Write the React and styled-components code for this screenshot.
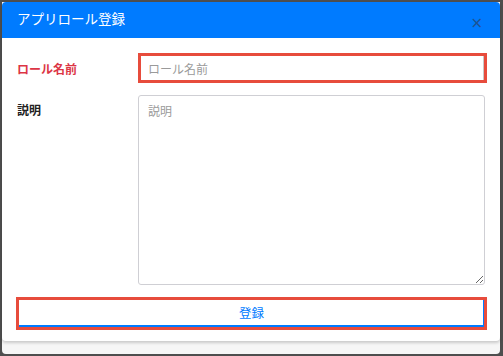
import React from "react";
import styled, { createGlobalStyle } from "styled-components";

const Global = createGlobalStyle`
  html, body { margin: 0; padding: 0; }
  body {
    width: 503px; height: 356px; overflow: hidden;
    background: #4e4e4e;
    font-family: "Noto Sans CJK JP", "Noto Sans", sans-serif;
  }
`;

const Backdrop = styled.div`
  box-sizing: border-box;
  width: 503px;
  height: 356px;
  padding: 2px 3px 2px 2px;
`;

const Frame = styled.div`
  background: #f6f6f6;
  height: 100%;
  border-radius: 0 0 4px 4px;
`;

const Modal = styled.div`
  background: #fff;
  border-radius: 4px;
  overflow: hidden;
  box-shadow: 0 2px 3px rgba(0, 0, 0, 0.18);
`;

const Header = styled.div`
  height: 36px;
  background: #007bff;
  display: flex;
  align-items: center;
  justify-content: space-between;
  padding: 0 17px 0 15px;
  color: #fff;
`;

const Title = styled.h5`
  margin: 0;
  font-size: 13.5px;
  font-weight: 400;
  line-height: 1;
  margin-top: -2px;
`;

const Close = styled.button`
  border: none;
  background: none;
  padding: 0;
  margin-top: 7px;
  font-size: 15px;
  line-height: 1;
  font-family: "DejaVu Sans", sans-serif;
  color: #1f5290;
  cursor: pointer;
`;

const Body = styled.div`
  padding: 15px 13px 11px 15px;
  display: flex;
  flex-direction: column;
  gap: 12px;
`;

const Row = styled.div`
  display: grid;
  grid-template-columns: 121px 1fr;
  align-items: ${(p) => (p.$top ? "start" : "center")};
`;

const Label = styled.label`
  font-size: 12px;
  font-weight: 700;
  color: ${(p) => (p.$error ? "#dc3545" : "#222")};
  padding-top: ${(p) => (p.$top ? "6px" : "0")};
`;

const Input = styled.input`
  box-sizing: border-box;
  height: 30px;
  width: 100%;
  border: 3px solid #e74c3c;
  border-radius: 0;
  padding: 0 8px 0 7px;
  font-size: 12px;
  font-family: inherit;
  outline: none;
  box-shadow: inset -1px 0 0 #c8c8c8;
  &::placeholder { color: #9a9a9a; }
`;

const TextArea = styled.textarea`
  box-sizing: border-box;
  height: 190px;
  width: 347px;
  border: 1px solid #cfcfd4;
  border-radius: 3px;
  padding: 6px 9px;
  font-size: 12px;
  font-family: inherit;
  resize: vertical;
  outline: none;
  &::placeholder { color: #9a9a9a; }
`;

const Submit = styled.button`
  box-sizing: border-box;
  height: 33px;
  width: 471px;
  margin-left: -1px;
  background: #fff;
  border: 3px solid #e74c3c;
  box-shadow: inset 0 -2px 0 #007bff, inset -1px 0 0 #007bff;
  color: #007bff;
  font-size: 12.5px;
  font-family: inherit;
  padding: 0 0 2px;
  cursor: pointer;
`;

export default function App() {
  return (
    <>
      <Global />
      <Backdrop>
        <Frame>
          <Modal>
            <Header>
              <Title>アプリロール登録</Title>
              <Close aria-label="close">×</Close>
            </Header>
            <Body>
              <Row>
                <Label $error>ロール名前</Label>
                <Input placeholder="ロール名前" />
              </Row>
              <Row $top>
                <Label $top>説明</Label>
                <TextArea placeholder="説明" />
              </Row>
              <Submit>登録</Submit>
            </Body>
          </Modal>
        </Frame>
      </Backdrop>
    </>
  );
}
